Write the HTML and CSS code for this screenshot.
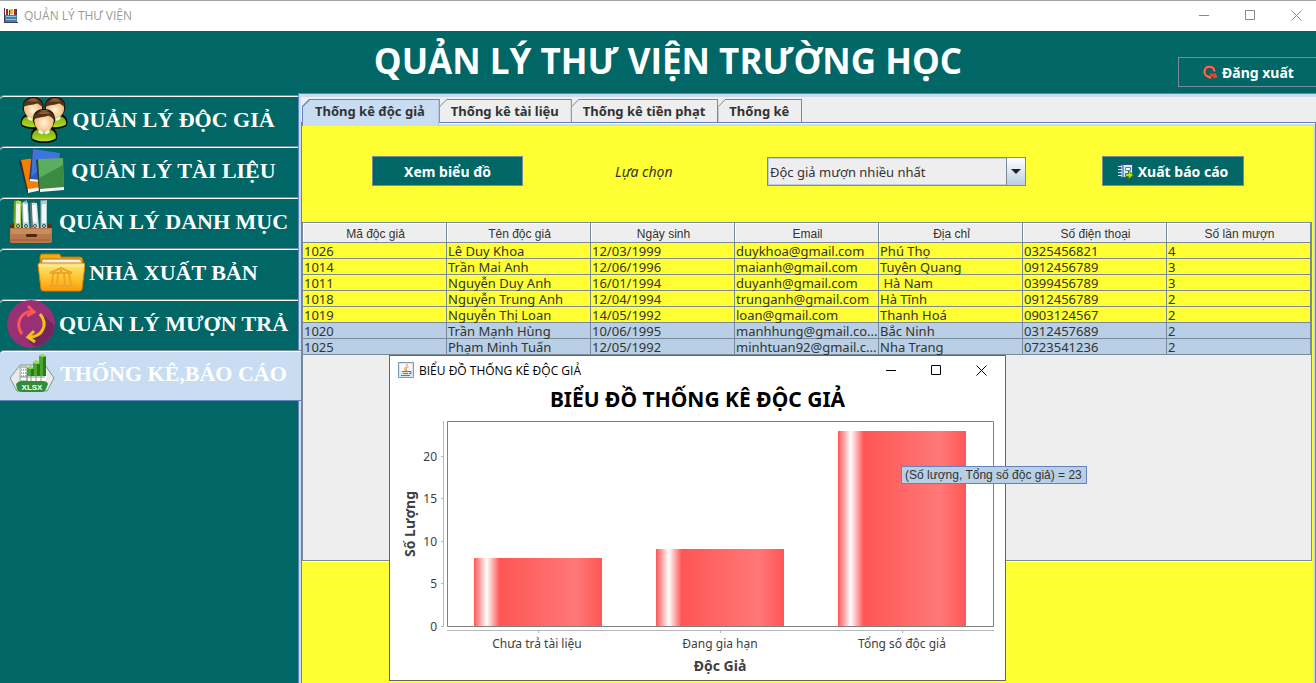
FILE: index.html
```html
<!DOCTYPE html>
<html lang="vi">
<head>
<meta charset="utf-8">
<title>QUẢN LÝ THƯ VIỆN</title>
<link rel="stylesheet" href="styles.css">
</head>
<body>
<div class="app">
  <div class="titlebar">
    <svg class="app-icon" width="14" height="15" viewBox="0 0 14 15" aria-hidden="true">
      <path fill="#4a3a48" d="M0 0h1v14H0zM0 14h14v1H0z"/>
      <path fill="#3d82ad" d="M1 7h12v7H1z"/>
      <path fill="#8cc4dc" d="M2 8h10v1H2zM2 11h10v1H2z"/>
      <path fill="#e9eef2" d="M2 1h11v6H2z"/>
      <path fill="#a5262a" d="M2 1h2v6H2zM10 1h2v6h-2z"/>
      <path fill="#f0b02c" d="M6 1h3v5H6z"/>
      <path fill="#39415a" d="M12 1h1v6h-1zM5 2h1v5H5z"/>
    </svg>
    <span class="titlebar-text">QUẢN LÝ THƯ VIỆN</span>
    <div class="window-buttons muted">
      <button type="button" aria-label="Thu nhỏ"><svg width="11" height="11" viewBox="0 0 11 11"><path d="M0 5.5h10"/></svg></button>
      <button type="button" aria-label="Phóng to"><svg width="11" height="11" viewBox="0 0 11 11"><path d="M.5.5h9v9h-9z"/></svg></button>
      <button type="button" aria-label="Đóng"><svg width="11" height="11" viewBox="0 0 11 11"><path d="M.5.5l10 10M10.500.5l-10 10"/></svg></button>
    </div>
  </div>

  <header class="banner">
    <h1>QUẢN LÝ THƯ VIỆN TRƯỜNG HỌC</h1>
    <button type="button" class="action logout">
      <svg width="16" height="16" viewBox="0 0 16 16" fill="none" aria-hidden="true">
        <path d="M12.500 6.500A5 5 0 1 0 6 11.500L9 13" stroke="#b52a18" stroke-width="3"/>
        <path d="M12.500 6.500A5 5 0 1 0 6 11.500L9 13" stroke="#f4705c" stroke-width="2"/>
        <path d="M8 8l4 1 1-1.500 3 5-5 1 1-1.500-4-1z" fill="#e8442e"/>
      </svg>
      Đăng xuất
    </button>
  </header>

  <div class="body">
    <nav class="sidebar" aria-label="Chức năng">
      <button type="button" class="side-tab">
        <svg width="48" height="46" viewBox="0 0 48 46" aria-hidden="true">
          <defs>
            <linearGradient id="shirt" x2="0" y2="1"><stop stop-color="#75a80c"/><stop offset="1" stop-color="#b3dc25"/></linearGradient>
            <radialGradient id="face" cy=".6"><stop stop-color="#fff3d6"/><stop offset="1" stop-color="#f5b777"/></radialGradient>
            <g id="person">
              <path d="M-13 31C-15 23-10 20-8 19C-14 12-12 0 0 0S14 12 8 19C10 20 15 23 13 31C7 36-7 36-13 31Z" fill="#090b04"/>
              <path d="M-12 30C-13 24-8 21-4 20H4C8 21 13 24 12 30C6 34-6 34-12 30Z" fill="url(#shirt)"/>
              <ellipse cy="12" rx="10" ry="11" fill="url(#face)"/>
              <path d="M-10.500 11C-12-2 12-2 10.500 11C8 9 6 7 4 7C0 9-6 8-10.500 11Z" fill="#55331a"/>
              <path d="M-6 5C-3 1 4 1 6 5z" fill="#8a5c34"/>
              <path d="M-5 21l5 3 5-3 1 3-4 2-2-2-2 2-4-2z" fill="#fff" opacity=".85"/>
            </g>
          </defs>
          <use href="#person" transform="translate(13 0) scale(.92)"/>
          <use href="#person" transform="translate(35 0) scale(.92)"/>
          <use href="#person" transform="translate(24 12) scale(.98)"/>
        </svg>
        QUẢN LÝ ĐỘC GIẢ
      </button>
      <button type="button" class="side-tab">
        <svg width="48" height="46" viewBox="0 0 48 46" aria-hidden="true">
          <path fill="#2b2b31" d="M0 13l3-1 8 31-3 1z"/>
          <path fill="#f57f00" d="M2 12l14-2 6 29-13 4z"/>
          <path fill="#f2f2f2" d="M9 41l14-2v3l-14 3z"/>
          <path fill="#35406b" d="M13 2l2-1-2 30-3 1z"/>
          <path fill="#3f73dd" d="M14 1l27 4-3 30-26-4z"/>
          <path fill="#315ab9" d="M12 29l14-12v17l-14-2z"/>
          <path fill="#f4f4f4" d="M11 31l11 1v2l-11-1z"/>
          <path fill="#24442f" d="M17 12l3-1 2 31-2 2z"/>
          <path fill="#5bad60" d="M19 11l25-1 1 29-24 3z"/>
          <path fill="#3c8b43" d="M20 30l24-13 1 22-24 3z"/>
          <path fill="#f3f4f4" d="M21 41l24-2v3l-24 2z"/>
        </svg>
        QUẢN LÝ TÀI LIỆU
      </button>
      <button type="button" class="side-tab">
        <svg width="48" height="46" viewBox="0 0 48 46" aria-hidden="true">
          <path fill="#759f14" d="M7 2l5-1v31H6z"/><path fill="#b6dd3f" d="M9 2h5v30H8z"/>
          <path fill="#eef2f0" d="M9 5h4v19H9z"/>
          <path fill="#83aab0" d="M14 4l6-3 3 31h-7z"/><path fill="#bbd9de" d="M16 3l5 1 1 28h-6z"/><path fill="#fff" d="M16 5l4 1 1 17h-4z"/>
          <path fill="#66737a" d="M23 4l5-2 4 30h-8z"/><path fill="#d8dfe2" d="M25 4h5l2 26h-6z"/><path fill="#f9fafa" d="M25 6h4l1 17h-4z"/>
          <path fill="#5c8790" d="M33 1h4l2 31h-6z"/><path fill="#a9ced3" d="M34 2l6-1v31h-6z"/><path fill="#eef8f8" d="M35 5h4v19h-4z"/>
          <g fill="#dfe5e8" stroke="#39474e"><circle cx="11" cy="27" r="1.500"/><circle cx="19" cy="27" r="1.500"/><circle cx="28" cy="27" r="1.500"/><circle cx="37" cy="27" r="1.500"/></g>
          <path fill="#5d3118" d="M3 26l4-2v6h34v-6l4 2v18H3z"/>
          <path fill="#b8784c" d="M3 29h42v13c0 2-1 2-2 2H5c-1 0-2 0-2-2z"/>
          <path fill="#cb8b5c" d="M4 30h40v5H4z"/>
          <rect x="19" y="35" width="11" height="3" rx="1" fill="#4e2912"/>
          <path stroke="#9b5d37" d="M4 41h40"/>
        </svg>
        QUẢN LÝ DANH MỤC
      </button>
      <button type="button" class="side-tab">
        <svg width="48" height="46" viewBox="0 0 48 46" aria-hidden="true">
          <defs><linearGradient id="folder" x2="0" y2="1"><stop stop-color="#ffe681"/><stop offset=".5" stop-color="#ffc735"/><stop offset="1" stop-color="#fb9b0c"/></linearGradient></defs>
          <path d="M3 10V6q0-2 2-2h17q2 0 2 3h19q3 0 3 4v4H3z" fill="#f4ad05" stroke="#b87200"/>
          <path d="M5 9h37q2 0 3 3v3H4z" fill="#efefec" stroke="#a1762c"/>
          <path d="M1 15q0-2 2-2h43q2 0 2 2l-3 24q0 2-3 2H7q-3 0-3-2z" fill="url(#folder)" stroke="#db8500"/>
          <path d="M2 16h44" stroke="#fff3ae"/>
          <g fill="none" stroke="#eea524" stroke-width="2"><path d="M13 23l11-5 11 5zM12 36h25M16 24l-1 11M21 24l-1 11M27 24l1 11M32 24l2 11"/></g>
          <circle cx="24" cy="21" r="1" fill="#d7890d"/>
        </svg>
        NHÀ XUẤT BẢN
      </button>
      <button type="button" class="side-tab">
        <svg width="48" height="48" viewBox="0 0 48 48" fill="none" aria-hidden="true">
          <circle cx="24" cy="24" r="24" fill="#973074"/>
          <path d="M37 16L48 26A24 24 0 0 1 28 47L21 41L36 34z" fill="#75265d"/>
          <path d="M15 34C7 23 15 10 26 12" stroke="#ff5555" stroke-width="3"/>
          <path d="M21 6l6 6-7 4" stroke="#ff5555" stroke-width="3"/>
          <path d="M33 14C42 25 35 37 22 37" stroke="#f1c40f" stroke-width="3"/>
          <path d="M27 31l-6 6 7 5" stroke="#f1c40f" stroke-width="3"/>
        </svg>
        QUẢN LÝ MƯỢN TRẢ
      </button>
      <button type="button" class="side-tab selected" aria-current="page">
        <svg width="48" height="46" viewBox="0 0 48 46" aria-hidden="true">
          <path d="M2 27L12 14h25l9 13-7 13H9z" fill="#e7ecea" stroke="#86938d"/>
          <path d="M11 18h27v14H11z" fill="#fff"/>
          <path d="M12 16h7v14h-7zM19 21v9M23 21v9M28 21v9M33 21v9M12 26h25" stroke="#8a9d91" fill="none"/>
          <path d="M13 19h5M13 22h5M13 25h5" stroke="#526157" stroke-dasharray="1 1"/>
          <path d="M19 17l3-2 4 2v8h-7zM25 12l3-3 4 3v13h-7zM31 5l3-2 4 2v20h-7z" fill="#49a82b"/>
          <path d="M19 17l3-2 4 2-3 1zM25 12l3-3 4 3-3 1zM31 5l3-2 4 2-3 1z" fill="#97df61"/>
          <path d="M23 18h3v7h-3zM29 13h3v12h-3zM35 6h3v19h-3z" fill="#277d17"/>
          <path d="M8 33q2-3 5-3h22q4 0 5 3l-2 5q-1 3-4 3H14q-4 0-5-3z" fill="#328d37"/>
          <text x="24" y="39" text-anchor="middle" class="xlsx">XLSX</text>
        </svg>
        THỐNG KÊ,BÁO CÁO
      </button>
    </nav>

    <main class="pane">
      <div class="tabs" role="tablist">
        <button type="button" role="tab" aria-selected="true" class="tab current"><span>Thống kê độc giả</span></button>
        <button type="button" role="tab" aria-selected="false" class="tab"><span>Thống kê tài liệu</span></button>
        <button type="button" role="tab" aria-selected="false" class="tab"><span>Thống kê tiền phạt</span></button>
        <button type="button" role="tab" aria-selected="false" class="tab"><span>Thống kê</span></button>
      </div>
      <section class="panel">
        <form class="controls">
          <button type="button" class="action show-chart">Xem biểu đồ</button>
          <label for="choice">Lựa chọn</label>
          <div class="combo">
            <select id="choice"><option>Độc giả mượn nhiều nhất</option></select>
            <span class="combo-arrow" aria-hidden="true"><svg width="10" height="5" viewBox="0 0 10 5"><path d="M0 0h10L5 5z" fill="#222"/></svg></span>
          </div>
          <button type="button" class="action export">
            <svg width="16" height="16" viewBox="0 0 16 16" aria-hidden="true">
              <path fill="#315982" d="M2 0h13v14H2z"/><path fill="#6ea3d6" d="M3 1h3v12H3z"/><path fill="#d8eaff" d="M6 1h8v12H6z"/>
              <path stroke="#d5e6f4" d="M0 2.500h4M0 5.500h4M0 8.500h4M0 11.500h4"/>
              <path fill="#fff" stroke="#4d7ca8" d="M7.500 3.500h5v3h-5z"/><path stroke="#7fa5c6" d="M7 9.500h5"/>
              <path fill="#a5e51d" stroke="#3f8111" d="M7.500 9.500h3v-2.500l5 4-5 4v-2.500h-3z"/>
            </svg>
            Xuất báo cáo
          </button>
        </form>
        <div class="scroll">
          <table>
            <thead><tr><th>Mã độc giả</th><th>Tên độc giả</th><th>Ngày sinh</th><th>Email</th><th>Địa chỉ</th><th>Số điện thoại</th><th>Số lần mượn</th></tr></thead>
            <tbody>
              <tr><td>1026</td><td>Lê Duy Khoa</td><td>12/03/1999</td><td>duykhoa@gmail.com</td><td>Phú Thọ</td><td>0325456821</td><td>4</td></tr>
              <tr><td>1014</td><td>Trần Mai Anh</td><td>12/06/1996</td><td>maianh@gmail.com</td><td>Tuyên Quang</td><td>0912456789</td><td>3</td></tr>
              <tr><td>1011</td><td>Nguyễn Duy Anh</td><td>16/01/1994</td><td>duyanh@gmail.com</td><td>&nbsp;Hà Nam</td><td>0399456789</td><td>3</td></tr>
              <tr><td>1018</td><td>Nguyễn Trung Anh</td><td>12/04/1994</td><td>trunganh@gmail.com</td><td>Hà Tĩnh</td><td>0912456789</td><td>2</td></tr>
              <tr><td>1019</td><td>Nguyễn Thị Loan</td><td>14/05/1992</td><td>loan@gmail.com</td><td>Thanh Hoá</td><td>0903124567</td><td>2</td></tr>
              <tr class="picked"><td>1020</td><td>Trần Mạnh Hùng</td><td>10/06/1995</td><td>manhhung@gmail.co...</td><td>Bắc Ninh</td><td>0312457689</td><td>2</td></tr>
              <tr class="picked"><td>1025</td><td>Phạm Minh Tuấn</td><td>12/05/1992</td><td>minhtuan92@gmail.c...</td><td>Nha Trang</td><td>0723541236</td><td>2</td></tr>
            </tbody>
          </table>
        </div>
      </section>
    </main>
  </div>

  <section class="dialog" role="dialog" aria-labelledby="dialog-title">
    <div class="dialog-bar">
      <svg width="16" height="16" viewBox="0 0 16 16" fill="none" aria-hidden="true">
        <path fill="#dde6ee" stroke="#7d97ad" d="M.5.5h15v15H.5z"/><path fill="#f7f9fb" d="M2 2h12v7H2z"/>
        <path d="M9 2C10 5 5 5 7.500 9M10.500 5C7 6 9 7 8.500 9" stroke="#e7852d"/>
        <path d="M4 9.500h7M5 11.500h5M3 13.500h9M11 9.500h2v2h-2" stroke="#557f9d"/>
      </svg>
      <span id="dialog-title">BIỂU ĐỒ THỐNG KÊ ĐỘC GIẢ</span>
      <div class="window-buttons">
        <button type="button" aria-label="Thu nhỏ"><svg width="11" height="11" viewBox="0 0 11 11"><path d="M0 5.500h10"/></svg></button>
        <button type="button" aria-label="Phóng to"><svg width="11" height="11" viewBox="0 0 11 11"><path d="M.5.5h9v9h-9z"/></svg></button>
        <button type="button" aria-label="Đóng"><svg width="11" height="11" viewBox="0 0 11 11"><path d="M.5.5l10 10M10.500.5l-10 10"/></svg></button>
      </div>
    </div>
    <h2>BIỂU ĐỒ THỐNG KÊ ĐỘC GIẢ</h2>
    <svg class="chart" viewBox="0 0 615 266" role="img" aria-label="Biểu đồ thống kê độc giả">
      <defs>
        <linearGradient id="bar">
          <stop offset="0" stop-color="#ff5555"/><stop offset=".1" stop-color="#ffffff"/><stop offset=".2" stop-color="#ff5555"/>
          <stop offset=".8" stop-color="#ff7878"/><stop offset="1" stop-color="#ff5555"/>
        </linearGradient>
      </defs>
      <g fill="url(#bar)">
        <rect x="84" y="144" width="128" height="68"/>
        <rect x="266" y="135" width="128" height="77"/>
        <rect x="448" y="17" width="128" height="195"/>
      </g>
      <path class="frame" d="M57.500 7.500h546v205h-546z"/>
      <path class="axis" d="M53.500 7v206M51 42.500h3M51 84.500h3M51 127.500h3M51 169.500h3M51 212.500h3M57 216.500h547M148.500 217v2M330.500 217v2M512.500 217v2"/>
      <g class="ticks" text-anchor="end">
        <text x="47" y="47">20</text><text x="47" y="89">15</text><text x="47" y="132">10</text><text x="47" y="174">5</text><text x="47" y="217">0</text>
      </g>
      <g class="categories" text-anchor="middle">
        <text x="147" y="234">Chưa trả tài liệu</text><text x="330" y="234">Đang gia hạn</text><text x="512" y="234">Tổng số độc giả</text>
      </g>
      <g class="axis-name" text-anchor="middle">
        <text x="330" y="257">Độc Giả</text>
        <text transform="translate(25 110) rotate(-90)">Số Lượng</text>
      </g>
    </svg>
    <div class="tooltip" role="tooltip">(Số lượng, Tổng số độc giả) = 23</div>
  </section>
</div>
</body>
</html>
```
FILE: styles.css
```css
:root {
  --teal: #006666;
  --yellow: #ffff33;
  --pale: #c8ddf2;
  --picked: #b8cfe5;
  --grey: #eeeeee;
  --blue: #6382bf;
  --line: #7a8a99;
  --ink: #333333;
}

* { box-sizing: border-box; }

body {
  margin: 0;
  font-family: "Noto Sans", "Open Sans", sans-serif;
  color: var(--ink);
}

button {
  border: 0;
  padding: 0;
  margin: 0;
  background: none;
  font: inherit;
  color: inherit;
}

.app {
  position: relative;
  display: flex;
  flex-direction: column;
  min-height: 100vh;
  overflow: hidden;
}

.titlebar {
  display: flex;
  align-items: center;
  height: 31px;
  padding: 0 0 2px 4px;
  border-top: 1px solid #a5a5a5;
  background: #ffffff;
}

.titlebar-text {
  margin-left: 6px;
  font: 12px "Open Sans", sans-serif;
  color: #999999;
}

.window-buttons {
  display: flex;
  margin: 0 1px 0 auto;
}

.window-buttons button {
  display: flex;
  justify-content: center;
  align-items: center;
  width: 45px;
  height: 28px;
}

.window-buttons.muted {
  margin-right: -3px;
  color: #888888;
}

.window-buttons.muted button { width: 46px; }

.window-buttons path {
  fill: none;
  stroke: currentColor;
}

.banner {
  display: grid;
  grid-template-columns: 1fr auto 1fr;
  align-items: start;
  height: 62px;
  background: var(--teal);
}

.banner h1 {
  grid-column: 2;
  margin: 0 0 0 20px;
  font: bold 35px/60px "Open Sans", sans-serif;
  color: #ffffff;
}

.action {
  display: flex;
  justify-content: center;
  align-items: center;
  gap: 4px;
  height: 30px;
  border: 1px solid var(--line);
  padding-top: 1px;
  background: var(--teal);
  font-size: 14px;
  font-weight: bold;
  color: #ffffff;
}

.logout {
  justify-self: end;
  width: 140px;
  margin: 26px -2px 0 0;
}

.body {
  flex: 1;
  display: grid;
  grid-template-columns: 298px 1fr;
}

.sidebar {
  padding-top: 2px;
  background: var(--teal);
}

.side-tab {
  display: flex;
  justify-content: center;
  align-items: center;
  gap: 4px;
  width: 100%;
  height: 51px;
  border-top: 1px solid var(--line);
  border-top-left-radius: 4px;
  box-shadow: inset 0 1px #ffffff;
  padding: 0 3px 3px 0;
  font: bold 22px "Liberation Serif", serif;
  white-space: nowrap;
  color: #ffffff;
}

.side-tab.selected {
  position: relative;
  width: 301px;
  padding-right: 6px;
  border-bottom: 1px solid var(--blue);
  background: var(--pale);
}

.xlsx {
  font: bold 8px "Liberation Sans", sans-serif;
  fill: #ffffff;
}

.pane {
  display: flex;
  flex-direction: column;
  min-width: 0;
  border-top: 1px solid var(--blue);
  border-left: 1px solid var(--blue);
  padding: 3px 0 0 2px;
  background: var(--pale);
}

.tabs {
  display: flex;
  padding: 2px 0 0 1px;
  background: var(--grey);
}

.tab {
  height: 23px;
  padding: 1px 1px 0 0;
  background: var(--line);
  clip-path: polygon(7px 0, 100% 0, 100% 100%, 0 100%, 0 7px);
  font-size: 13px;
  font-weight: bold;
  line-height: 22px;
}

.tab span {
  display: block;
  height: 100%;
  padding: 0 12px 0 11px;
  background: var(--grey);
  clip-path: polygon(7px 0, 100% 0, 100% 100%, 0 100%, 0 7px);
}

.tab.current {
  position: relative;
  height: 27px;
  margin-bottom: -4px;
  padding-left: 1px;
  background: var(--blue);
  clip-path: polygon(7px 0, 100% 0, 100% 24px, calc(100% - 1px) 24px, calc(100% - 1px) 100%, 0 100%, 0 7px);
}

.tab.current span {
  padding: 0 14px 0 12px;
  background: var(--pale);
}

.panel {
  flex: 1;
  border: solid var(--blue);
  border-width: 1px 1px 0 1px;
  box-shadow: inset 0 1px #ffffff, inset 0 3px var(--pale), inset -2px 0 var(--pale);
  padding-right: 3px;
  background: var(--yellow);
}

.controls {
  display: flex;
  align-items: center;
  padding: 33px 68px 36px 70px;
  font-size: 14px;
}

.controls label {
  width: 56px;
  margin: 0 96px 0 92px;
  padding-top: 1px;
  font-style: italic;
  white-space: nowrap;
}

.show-chart { width: 151px; }

.export {
  width: 142px;
  margin-left: 76px;
}

.combo {
  position: relative;
  flex: 1;
  height: 29px;
}

.combo select {
  appearance: none;
  width: 100%;
  height: 100%;
  border: 1px solid var(--line);
  border-radius: 0;
  box-shadow: inset 0 0 0 1px var(--picked);
  padding: 1px 20px 0 2px;
  background: var(--grey);
  font: inherit;
  font-size: 13px;
  color: var(--ink);
}

.combo-arrow {
  position: absolute;
  top: 0;
  right: 0;
  bottom: 0;
  display: flex;
  justify-content: center;
  align-items: center;
  width: 20px;
  border: 1px solid var(--line);
  background: linear-gradient(#ffffff, var(--picked));
  pointer-events: none;
}

.scroll {
  height: 339px;
  border: 1px solid var(--line);
  box-shadow: 0 1px #ffffff;
  background: var(--grey);
}

table {
  width: 100%;
  table-layout: fixed;
  border-spacing: 0;
  font-size: 13px;
}

th, td {
  border-right: 1px solid var(--line);
  border-bottom: 1px solid var(--line);
  white-space: nowrap;
}

th {
  height: 20px;
  padding: 3px 0 0 2px;
  box-shadow: inset 1px 1px #ffffff;
  font: 12px/16px "Liberation Sans", sans-serif;
}

td {
  height: 16px;
  padding: 1px 0 0 1px;
  background: var(--yellow);
  line-height: 14px;
}

.picked td { background: var(--picked); }

.dialog {
  position: absolute;
  top: 355px;
  left: 389px;
  width: 617px;
  border: 1px solid #666666;
  background: #ffffff;
}

.dialog-bar {
  display: flex;
  align-items: center;
  height: 28px;
  padding-left: 8px;
  font: 12px "Open Sans", sans-serif;
  color: #000000;
}

.dialog-bar span { margin-left: 5px; }

.dialog h2 {
  margin: 0;
  font-size: 21px;
  line-height: 30px;
  text-align: center;
  color: #000000;
}

.chart {
  display: block;
  width: 100%;
  font-family: "Noto Sans", sans-serif;
}

.frame { fill: none; stroke: #808080; }
.axis { fill: none; stroke: #b8b8b8; }
.ticks, .categories { font-size: 12px; fill: #404040; }
.axis-name { font-size: 14px; font-weight: bold; fill: #404040; }

.tooltip {
  position: absolute;
  top: 110px;
  left: 511px;
  border: 1px solid var(--blue);
  padding: 0 4px 0 3px;
  background: var(--picked);
  font: 12px/16px "Liberation Sans", sans-serif;
  white-space: nowrap;
}
```
